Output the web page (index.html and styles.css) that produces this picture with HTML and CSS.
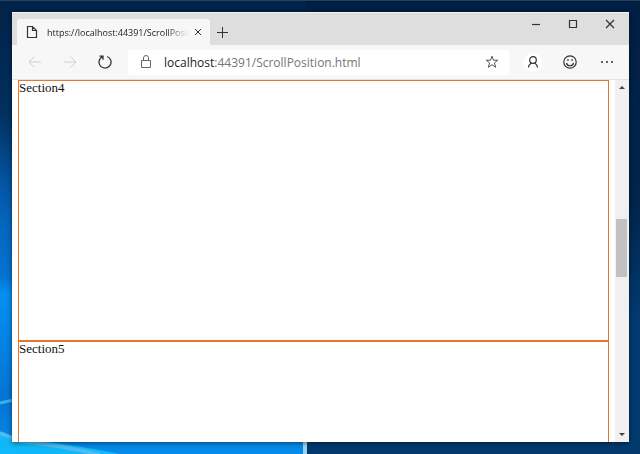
FILE: index.html
```
<!DOCTYPE html>
<html lang="en">
<head>
<meta charset="utf-8">
<title>ScrollPosition</title>
<link rel="stylesheet" href="styles.css">
</head>
<body>
<svg class="wallpaper" viewBox="0 0 640 454" preserveAspectRatio="none" aria-hidden="true">
  <defs>
    <linearGradient id="left" x1="0" y1="0" x2="0" y2="1">
      <stop offset="0" stop-color="#022248"/><stop offset=".25" stop-color="#02305f"/>
      <stop offset=".4" stop-color="#0454a0"/><stop offset=".5" stop-color="#0567c0"/>
      <stop offset=".61" stop-color="#0573d2"/><stop offset=".65" stop-color="#0590f2"/>
      <stop offset=".88" stop-color="#0573d2"/><stop offset="1" stop-color="#058cea"/>
    </linearGradient>
    <linearGradient id="right" x1="0" y1="0" x2="0" y2="1">
      <stop offset="0" stop-color="#011f43"/><stop offset=".45" stop-color="#01254d"/>
      <stop offset=".7" stop-color="#023a70"/><stop offset="1" stop-color="#023a6e"/>
    </linearGradient>
  </defs>
  <rect width="640" height="454" fill="url(#right)"/>
  <rect width="306" height="454" fill="url(#left)"/>
  <rect width="640" height="1" fill="#24415f"/>
  <path d="M0 403Q8 401 14 400" stroke="#37b3ed" stroke-width="3" fill="none"/>
  <path d="M0 432L12 438Q60 442 120 454H0Z" fill="#0fb8f8"/>
  <path d="M0 433L20 441Q65 446 100 455" stroke="#4cbcf2" stroke-width="4" fill="none"/>
  <rect x="303" y="440" width="4" height="14" fill="#9bd3ee"/>
</svg>
<div class="window">
  <header class="titlebar">
    <div class="tab">
      <svg class="page-icon" viewBox="0 0 12 14"><path d="M1.500 1.500h5l4 4v7h-9zM6.500 1.500v4h4"/></svg>
      <span class="tab-title">https://localhost:44391/ScrollPosition.html</span>
      <button class="tab-close" aria-label="Close tab"><svg viewBox="0 0 8 8"><path d="M1 1l6 6M7 1l-6 6"/></svg></button>
    </div>
    <button class="new-tab" aria-label="New tab"><svg viewBox="0 0 12 12"><path d="M6.500 1v11M1 6.500h11"/></svg></button>
    <div class="window-buttons">
      <button aria-label="Minimize"><svg viewBox="0 0 10 10"><path d="M1 5.500h8"/></svg></button>
      <button aria-label="Maximize"><svg viewBox="0 0 10 10"><path d="M1.500 1.500h7v7h-7z"/></svg></button>
      <button aria-label="Close"><svg viewBox="0 0 10 10"><path d="M1 1l8 8M9 1L1 9"/></svg></button>
    </div>
  </header>
  <nav class="toolbar">
    <button class="nav-button" aria-label="Back" disabled><svg viewBox="0 0 14 14"><path d="M13 7H1M6.500 1.500L1 7l5.500 5.500"/></svg></button>
    <button class="nav-button" aria-label="Forward" disabled><svg viewBox="0 0 14 14"><path d="M1 7h12M7.500 1.500L13 7l-5.500 5.500"/></svg></button>
    <button class="nav-button" aria-label="Refresh"><svg class="refresh" viewBox="0 0 14 14"><path d="M9.200 1.500A6 6 0 1 1 4.600 1.600M1.500 1.200h3.500v3.500"/></svg></button>
    <div class="address">
      <svg class="lock" viewBox="0 0 12 14"><path d="M1.500 5.500h9v7h-9zM3.500 5.500V3a2.500 2.500 0 0 1 5 0v2.500"/></svg>
      <a class="url" href="#section4"><span class="host">localhost</span>:44391/ScrollPosition.html</a>
      <button class="star" aria-label="Add to favorites"><svg viewBox="0 0 14 14"><path d="M7 1.200l1.500 4h4.300L9.400 7.900l1.300 4.400L7 9.700l-3.700 2.600 1.300-4.400L1.200 5.200h4.300z"/></svg></button>
    </div>
    <div class="actions">
      <button class="profile" aria-label="Profile"><svg viewBox="0 0 14 14"><circle cx="7" cy="5" r="3.300"/><path d="M2.500 12.500c0-2.500 1.300-3.600 2.800-4.600M11.500 12.500c0-2.500-1.300-3.600-2.800-4.600"/></svg></button>
      <button aria-label="Send feedback"><svg viewBox="0 0 14 14"><circle cx="7" cy="7" r="6.200"/><path d="M3.500 8a3.600 3.600 0 0 0 7 0"/><path class="dot" d="M4.200 4.200h1.500v1.500H4.200zM8.300 4.200h1.500v1.500H8.300z"/></svg></button>
      <button aria-label="Settings and more"><svg viewBox="0 0 14 14"><path class="dot" d="M1 6.300h2v1.500H1zM6 6.300h2v1.500H6zM11 6.300h2v1.500h-2z"/></svg></button>
    </div>
  </nav>
  <div class="viewport">
    <main class="page">
      <section id="section4">Section4</section>
      <section id="section5">Section5</section>
    </main>
    <div class="scrollbar" aria-hidden="true">
      <svg class="arrow" viewBox="0 0 8 4"><path d="M0 4l4-4 4 4z"/></svg>
      <div class="track"><div class="thumb"></div></div>
      <svg class="arrow" viewBox="0 0 8 4"><path d="M0 0h8L4 4z"/></svg>
    </div>
  </div>
</div>
</body>
</html>
```
FILE: styles.css
```
* { box-sizing: border-box; }
body {
  margin: 0;
  height: 100vh;
  padding: 12px 11px 12px 12px;
  overflow: hidden;
  background: #011f43;
  font-family: "Open Sans", "Noto Sans", sans-serif;
}
.wallpaper { position: absolute; inset: 0; width: 100%; height: 100%; }
svg { display: block; fill: none; stroke: #333; stroke-width: 1; }
.wallpaper { stroke: none; }
button {
  display: flex;
  align-items: center;
  justify-content: center;
  padding: 0;
  border: 0;
  background: none;
}
.window {
  position: relative;
  display: flex;
  flex-direction: column;
  height: 100%;
  background: #fff;
  box-shadow: 0 1px 5px rgba(0, 0, 0, .5);
}
.titlebar {
  display: flex;
  flex: none;
  height: 33px;
  padding-left: 5px;
  background: #dedede;
  border-top: 1px solid #f4f4f4;
}
.tab {
  display: flex;
  align-items: center;
  width: 193px;
  margin-top: 6px;
  padding: 0 7px 0 9px;
  border-radius: 3px 3px 0 0;
  background: #f7f7f7;
}
.page-icon { width: 12px; height: 14px; stroke-width: 1.2; }
.tab-title {
  flex: 1;
  min-width: 0;
  margin: 0 4px 0 9px;
  overflow: hidden;
  white-space: nowrap;
  font-size: 9px;
  color: #222;
  -webkit-mask-image: linear-gradient(to right, #000 84%, transparent);
  mask-image: linear-gradient(to right, #000 84%, transparent);
}
.tab-close { width: 10px; height: 10px; }
.tab-close svg { width: 8px; height: 8px; }
.new-tab { width: 24px; margin-top: 6px; }
.new-tab svg { width: 12px; height: 12px; }
.window-buttons { display: flex; height: 22px; margin-left: auto; padding-right: 1px; }
.window-buttons button { width: 37px; }
.window-buttons svg { width: 10px; height: 10px; stroke-width: 1.2; }
.toolbar {
  display: flex;
  flex: none;
  align-items: center;
  height: 35px;
  padding-left: 5px;
  background: #f7f7f7;
  border-bottom: 1px solid #e2e2e2;
}
.nav-button { width: 35px; height: 28px; }
.nav-button svg { width: 14px; height: 14px; }
.nav-button .refresh { stroke-width: 1.3; }
.nav-button:disabled svg { stroke: #d0d0d0; }
.address {
  display: flex;
  flex: 1;
  align-items: center;
  height: 25px;
  margin-left: 6px;
  padding: 0 10px 0 12px;
  border-radius: 3px;
  background: #fff;
}
.lock { width: 12px; height: 14px; stroke: #666; }
.url { flex: 1; margin-left: 12px; font-size: 12px; color: #767676; text-decoration: none; }
.host { color: #222; }
.star svg { width: 14px; height: 14px; stroke: #555; }
.actions { display: flex; align-items: center; gap: 18px; padding: 0 13px 0 14px; }
.actions button { width: 19px; height: 19px; border-radius: 50%; }
.actions svg { width: 14px; height: 14px; stroke-width: 1.2; }
.actions .profile { background: #fff; }
.actions .dot { fill: #333; stroke: none; }
.viewport { display: flex; flex: 1; min-height: 0; }
.page {
  flex: 1;
  padding: 0 6px;
  overflow: hidden;
  font: 13px/14px "Liberation Serif", serif;
  color: #111;
}
section { height: 261px; border: 1px solid #e8752c; }
.scrollbar {
  display: flex;
  flex-direction: column;
  align-items: center;
  width: 14px;
  padding: 6px 1px;
  background: #f0f0f0;
}
.arrow { width: 6px; height: 3px; fill: #444; stroke: none; }
.track { flex: 1; width: 100%; padding-top: 130px; }
.thumb { width: 11px; height: 58px; background: #c1c1c1; }
```
